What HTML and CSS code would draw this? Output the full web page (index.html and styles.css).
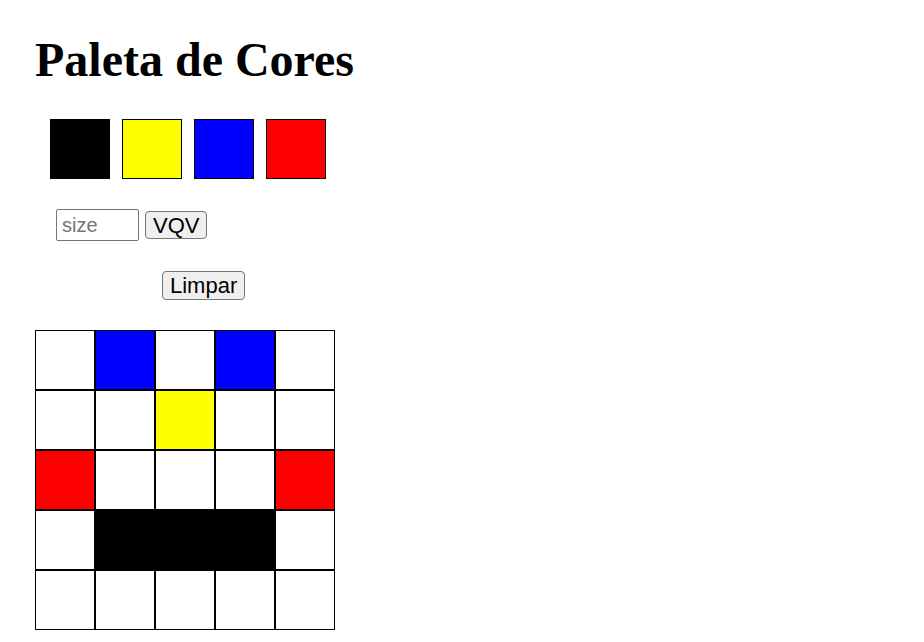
FILE: index.html
```html
<!DOCTYPE html>
<html lang="pt">
<head>
<meta charset="utf-8">
<title>Paleta de Cores</title>
<link rel="stylesheet" href="styles.css">
</head>
<body>
<main class="page">
  <h1 class="title">Paleta de Cores</h1>
  <div class="palette">
    <div class="swatch black"></div>
    <div class="swatch yellow"></div>
    <div class="swatch blue"></div>
    <div class="swatch red"></div>
  </div>
  <div class="controls">
    <input class="size-input" type="number" placeholder="size">
    <button class="btn btn-vqv">VQV</button>
  </div>
  <div class="clear-row">
    <button class="btn btn-clear">Limpar</button>
  </div>
  <div class="board">
    <div class="pixel"></div><div class="pixel blue"></div><div class="pixel"></div><div class="pixel blue"></div><div class="pixel"></div>
    <div class="pixel"></div><div class="pixel"></div><div class="pixel yellow"></div><div class="pixel"></div><div class="pixel"></div>
    <div class="pixel red"></div><div class="pixel"></div><div class="pixel"></div><div class="pixel"></div><div class="pixel red"></div>
    <div class="pixel"></div><div class="pixel black"></div><div class="pixel black"></div><div class="pixel black"></div><div class="pixel"></div>
    <div class="pixel"></div><div class="pixel"></div><div class="pixel"></div><div class="pixel"></div><div class="pixel"></div>
  </div>
</main>
</body>
</html>
```
FILE: styles.css
```css
html, body {
  margin: 0;
  padding: 0;
  background: #ffffff;
}

.page {
  padding: 32px 35px 0 35px;
  display: flex;
  flex-direction: column;
  align-items: flex-start;
  font-family: "Liberation Serif", "Times New Roman", serif;
  color: #000;
}

.title {
  margin: 0;
  font-size: 48px;
  line-height: 55px;
  font-weight: bold;
}

.palette {
  margin-top: 32px;
  margin-left: 15px;
  display: flex;
  gap: 12px;
}

.swatch {
  width: 60px;
  height: 60px;
  box-sizing: border-box;
  border: 1px solid #000;
}

.black { background: #000000; }
.yellow { background: #ffff00; }
.blue { background: #0000ff; }
.red { background: #ff0000; }

.controls {
  margin-top: 30px;
  margin-left: 21px;
  display: flex;
  align-items: center;
  gap: 6px;
}

.size-input {
  box-sizing: border-box;
  width: 83px;
  height: 32px;
  margin: 0;
  padding: 1px 5px;
  border: 1px solid #767676;
  border-radius: 2px;
  font-family: "Liberation Sans", Arial, sans-serif;
  font-size: 20px;
  color: #000;
  background: #fff;
  -moz-appearance: textfield;
}

.size-input::-webkit-outer-spin-button,
.size-input::-webkit-inner-spin-button {
  -webkit-appearance: none;
  margin: 0;
}

.size-input::placeholder {
  color: #757575;
}

.btn {
  box-sizing: border-box;
  height: 28px;
  margin: 0;
  padding: 0 7px;
  border: 1px solid #767676;
  border-radius: 4px;
  background: #efefef;
  color: #000;
  font-family: "Liberation Sans", Arial, sans-serif;
  font-size: 22px;
  line-height: 25px;
}

.clear-row {
  margin-top: 30px;
  margin-left: 127px;
}

.btn-clear {
  height: 29px;
}

.board {
  margin-top: 30px;
  display: grid;
  grid-template-columns: repeat(5, 60px);
  grid-auto-rows: 60px;
}

.pixel {
  box-sizing: border-box;
  border: 1px solid #000;
  background: #ffffff;
}

.pixel.black { background: #000000; }
.pixel.yellow { background: #ffff00; }
.pixel.blue { background: #0000ff; }
.pixel.red { background: #ff0000; }
```
